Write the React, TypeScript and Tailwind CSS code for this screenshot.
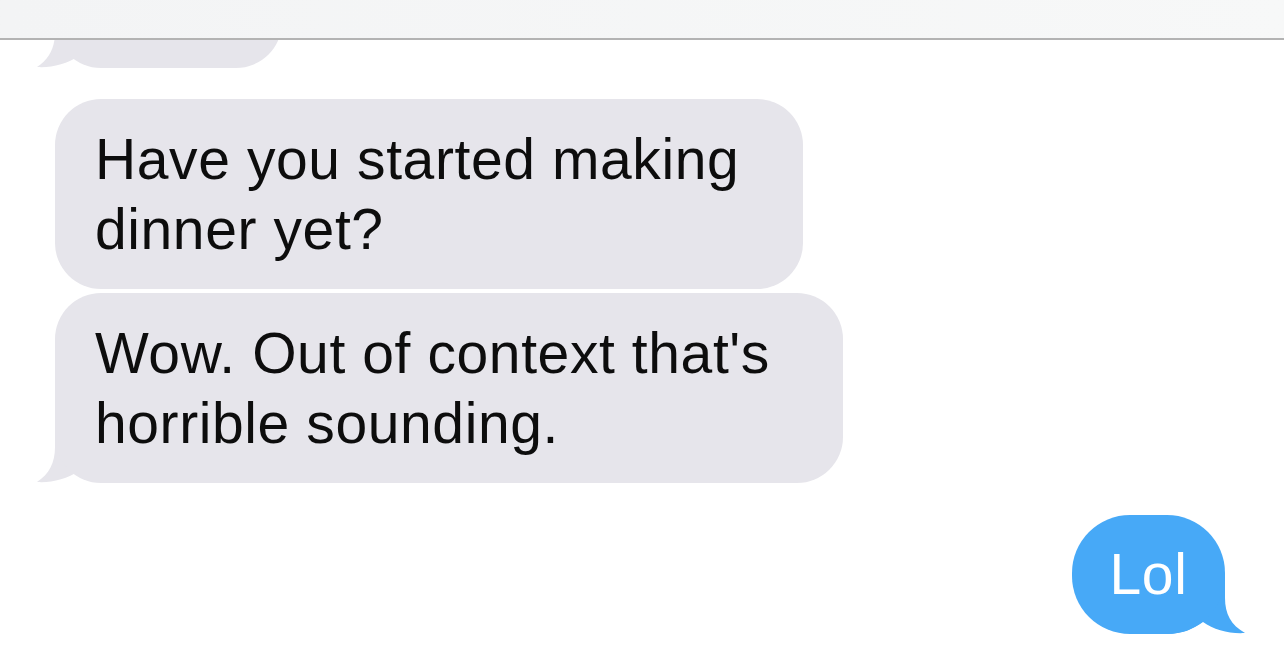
import type { ReactNode } from "react";

const GRAY = "#e6e5eb";
const BLUE = "#47a9f7";

function TailLeft({ color }: { color: string }) {
  return (
    <svg
      className="absolute bottom-0 left-[-18px]"
      width="80"
      height="60"
      viewBox="0 0 80 60"
      aria-hidden="true"
    >
      <path
        d="M40 0 L18 0 L18 24 C18 40 12 51 0 59 C14 60 30 56 42 48 C52 55 62 60 80 60 L80 0 Z"
        fill={color}
      />
    </svg>
  );
}

function TailRight({ color }: { color: string }) {
  return (
    <svg
      className="absolute bottom-0 right-[-21px]"
      width="90"
      height="60"
      viewBox="0 0 90 60"
      aria-hidden="true"
    >
      <path
        d="M40 0 L69 0 L69 24 C69 40 75 51 89 59 C74 60 58 56 47 48 C37 55 27 60 10 60 L10 0 Z"
        fill={color}
      />
    </svg>
  );
}

function Received({ children, width, className = "", tail = false }: { children?: ReactNode; width: string; className?: string; tail?: boolean }) {
  return (
    <div className={`relative ${width} ${className}`}>
      <div className="relative z-10 rounded-[46px] bg-[#e6e5eb] pl-[40px] pr-6 py-[25px] text-[57px] leading-[70px] tracking-[0.6px] text-[#0d0d0d] whitespace-nowrap">
        {children}
      </div>
      {tail && <TailLeft color={GRAY} />}
    </div>
  );
}

export default function App() {
  return (
    <div className="w-[1284px] h-[648px] bg-white overflow-hidden flex flex-col font-['Liberation_Sans',Arial,sans-serif]">
      {/* Nav bar */}
      <div className="h-[40px] shrink-0 bg-gradient-to-r from-[#f3f4f5] to-[#f7f8f8] border-b-2 border-[#b3b3b3] relative z-20" />

      {/* Messages */}
      <div className="flex-1 overflow-hidden flex flex-col px-[55px]">
        {/* Cut-off bubble */}
        <div className="relative w-[227px] h-[120px] mt-[-92px] shrink-0">
          <div className="relative z-10 h-full rounded-[46px]" style={{ background: GRAY }} />
          <TailLeft color={GRAY} />
        </div>

        <Received width="w-[748px]" className="mt-[31px]">
          Have you started making
          <br />
          dinner yet?
        </Received>

        <Received width="w-[788px]" className="mt-[4px]" tail>
          Wow. Out of context that's
          <br />
          horrible sounding.
        </Received>

        <div className="self-end mr-[4px] mt-[32px] relative">
          <div className="relative z-10 w-[153px] rounded-[58px] bg-[#47a9f7] py-[24px] text-center text-[57px] leading-[71px] tracking-[0.6px] text-white">
            Lol
          </div>
          <TailRight color={BLUE} />
        </div>
      </div>
    </div>
  );
}
